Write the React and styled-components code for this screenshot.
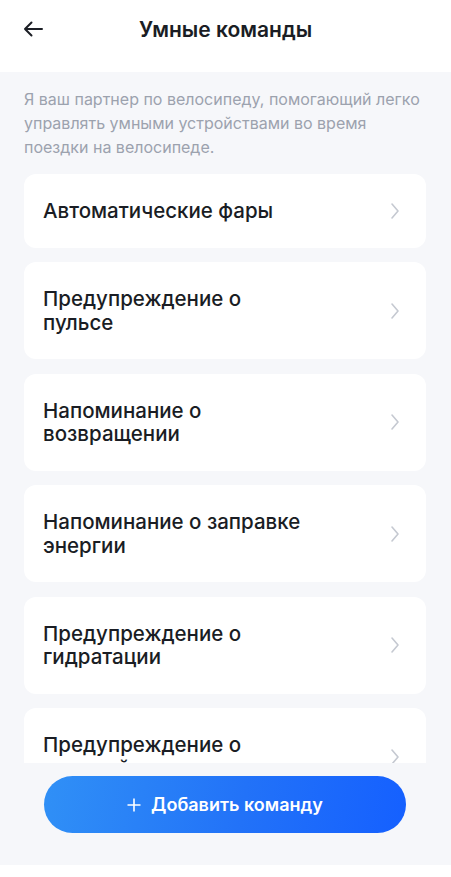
import React from "react";
import styled, { createGlobalStyle } from "styled-components";

const Global = createGlobalStyle`
  html, body { margin: 0; padding: 0; background: #ffffff; }
  body { font-family: Inter, "Noto Sans", "Liberation Sans", sans-serif; -webkit-font-smoothing: antialiased; }
  * { box-sizing: border-box; }
`;

const Screen = styled.div`
  width: 451px;
  height: 877px;
  display: flex;
  flex-direction: column;
  background: #ffffff;
  overflow: hidden;
`;

const Header = styled.header`
  height: 72px;
  flex: none;
  display: grid;
  grid-template-columns: 64px 1fr 64px;
  align-items: center;
  padding-bottom: 14px;
`;

const BackButton = styled.button`
  border: none;
  background: transparent;
  padding: 0 0 0 23px;
  height: 40px;
  display: flex;
  align-items: center;
  cursor: pointer;
  color: #1c1f26;
`;

const Title = styled.h1`
  margin: 0;
  text-align: center;
  font-size: 21px;
  font-weight: 600;
  color: #1a1d24;
`;

const Main = styled.main`
  height: 793px;
  flex: none;
  background: #f6f7fa;
  display: flex;
  flex-direction: column;
`;

const Description = styled.p`
  margin: 0;
  padding: 15px 24px 0;
  font-size: 16px;
  line-height: 24px;
  color: #9ca2ae;
`;

const List = styled.div`
  flex: 1;
  min-height: 0;
  overflow: hidden;
  margin-top: 15px;
  padding: 0 25px 0 24px;
  display: flex;
  flex-direction: column;
  gap: 14.5px;
`;

const Card = styled.div`
  flex: none;
  background: #ffffff;
  border-radius: 12px;
  padding: 25px 26px 25px 19px;
  display: flex;
  align-items: center;
  justify-content: space-between;
`;

const CardText = styled.div`
  flex: 0 0 268px;
  width: 268px;
  font-size: 20.5px;
  line-height: 23.5px;
  font-weight: 500;
  color: #1a1d24;
`;

const Chevron = styled.svg`
  flex: none;
  width: 10px;
  height: 18px;
`;

const Footer = styled.div`
  flex: none;
  padding: 13px 45px 32px 44px;
`;

const AddButton = styled.button`
  width: 100%;
  height: 57px;
  border: none;
  border-radius: 29px;
  background: linear-gradient(100deg, #3090f6 0%, #2272f8 55%, #1560ff 100%);
  color: #ffffff;
  font-family: inherit;
  font-size: 18px;
  font-weight: 600;
  display: flex;
  align-items: center;
  justify-content: center;
  gap: 10px;
  cursor: pointer;
`;

const items = [
  "Автоматические фары",
  "Предупреждение о пульсе",
  "Напоминание о возвращении",
  "Напоминание о заправке энергии",
  "Предупреждение о гидратации",
  "Предупреждение о высокой скорости",
];

export default function App() {
  return (
    <Screen>
      <Global />
      <Header>
        <BackButton aria-label="Назад">
          <svg width="20" height="16" viewBox="0 0 20 16" fill="none">
            <path d="M19 8H2M8.5 1.5L2 8l6.5 6.5" stroke="#1c1f26" strokeWidth="2" strokeLinecap="round" strokeLinejoin="round" />
          </svg>
        </BackButton>
        <Title>Умные команды</Title>
        <span />
      </Header>
      <Main>
        <Description>
          Я ваш партнер по велосипеду, помогающий легко управлять умными устройствами во время поездки на велосипеде.
        </Description>
        <List>
          {items.map((t) => (
            <Card key={t}>
              <CardText>{t}</CardText>
              <Chevron viewBox="0 0 10 18" fill="none">
                <path d="M2 2l6 7-6 7" stroke="#c5c9d1" strokeWidth="1.6" strokeLinecap="round" strokeLinejoin="round" />
              </Chevron>
            </Card>
          ))}
        </List>
        <Footer>
          <AddButton>
            <svg width="14" height="14" viewBox="0 0 14 14" fill="none">
              <path d="M7 0.5v13M0.5 7h13" stroke="#ffffff" strokeWidth="1.6" />
            </svg>
            Добавить команду
          </AddButton>
        </Footer>
      </Main>
    </Screen>
  );
}
